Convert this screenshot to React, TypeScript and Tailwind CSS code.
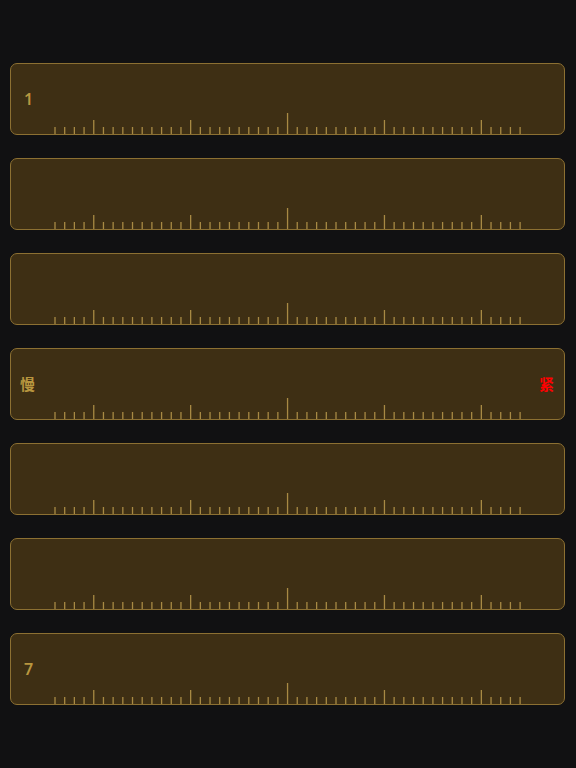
import React from "react";

const TICKS = Array.from({ length: 49 }, (_, i) => i);
const SP = 9.69;

function Ruler() {
  const w = 48 * SP + 2;
  return (
    <svg width={w} height={22} viewBox={`0 0 ${w} 22`} className="block">
      {TICKS.map((i) => {
        const x = 1 + i * SP;
        const h = i === 24 ? 21 : (i - 4) % 10 === 0 ? 14 : 7;
        return (
          <line
            key={i}
            x1={x}
            x2={x}
            y1={22}
            y2={22 - h}
            stroke="#a88a44"
            strokeWidth={1.3}
          />
        );
      })}
    </svg>
  );
}

type Row = { left?: string; right?: string };

const rows: Row[] = [
  { left: "1" },
  {},
  {},
  { left: "慢", right: "紧" },
  {},
  {},
  { left: "7" },
];

export default function App() {
  return (
    <div
      className="w-[576px] h-[768px] bg-[#111112] pt-[63px] px-[10px] flex flex-col gap-[23px]"
      style={{ fontFamily: '"Noto Sans", "Noto Sans CJK SC", sans-serif' }}
    >
      {rows.map((r, idx) => (
        <div
          key={idx}
          className="relative h-[72px] w-[555px] rounded-[7px] border border-[#8c7032] bg-[#3e2f14] flex flex-col justify-end items-center"
        >
          <div className="absolute inset-0 flex items-center justify-between pl-[9px] pr-[10px]">
            <span
              className={
                r.left && /\d/.test(r.left)
                  ? "text-[16px] font-semibold text-[#b8963f] pl-[4px]"
                  : "text-[15px] font-semibold text-[#b8963f]"
              }
            >
              {r.left ?? ""}
            </span>
            <span className="text-[15px] font-semibold text-[#ff0000]">
              {r.right ?? ""}
            </span>
          </div>
          <Ruler />
        </div>
      ))}
    </div>
  );
}
